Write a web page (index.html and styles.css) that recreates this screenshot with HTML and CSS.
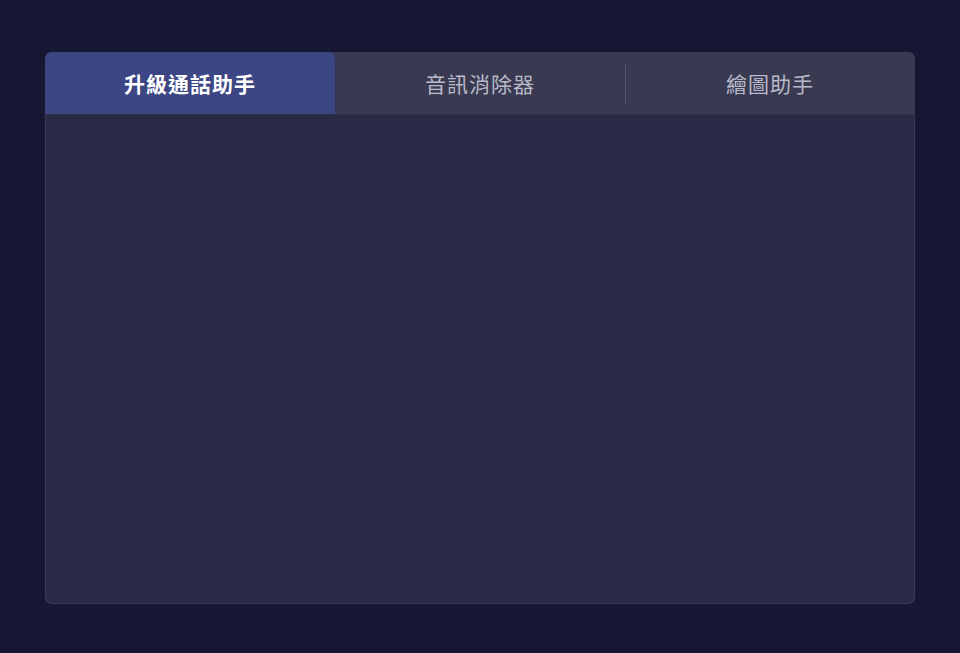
FILE: index.html
```html
<!DOCTYPE html>
<html lang="zh-Hant">
<head>
<meta charset="utf-8">
<title>Tabs</title>
<link rel="stylesheet" href="styles.css">
</head>
<body>
<div class="page">
  <div class="card">
    <div class="tabs">
      <div class="tab active">升級通話助手</div>
      <div class="tab">音訊消除器</div>
      <div class="tab divided">繪圖助手</div>
    </div>
    <div class="body"></div>
  </div>
</div>
</body>
</html>
```
FILE: styles.css
```css
html, body {
  margin: 0;
  padding: 0;
  background: #161833;
  font-family: "Noto Sans CJK TC", "Noto Sans", sans-serif;
}
.page {
  width: 960px;
  height: 653px;
  padding: 52px 45px 0 45px;
  box-sizing: border-box;
}
.card {
  width: 870px;
  height: 552px;
  display: flex;
  flex-direction: column;
  border-radius: 7px;
  background: #292b46;
  overflow: hidden;
  box-shadow: inset 0 0 0 1px #3a3c57;
}
.tabs {
  display: grid;
  grid-template-columns: 290px 290px 290px;
  height: 62px;
  background: #393a52;
  border-bottom: 1px solid #2f3048;
  position: relative;
}
.tab {
  display: flex;
  align-items: center;
  justify-content: center;
  font-size: 21px;
  color: #b9bac9;
  letter-spacing: 1px;
  position: relative;
}
.tab.active {
  background: #3d4684;
  color: #ffffff;
  font-weight: 700;
  border-top-right-radius: 6px;
}
.tab.divided::before {
  content: "";
  position: absolute;
  left: 0;
  top: 11px;
  bottom: 11px;
  width: 1px;
  background: #52546b;
}
.body {
  flex: 1;
}
```
